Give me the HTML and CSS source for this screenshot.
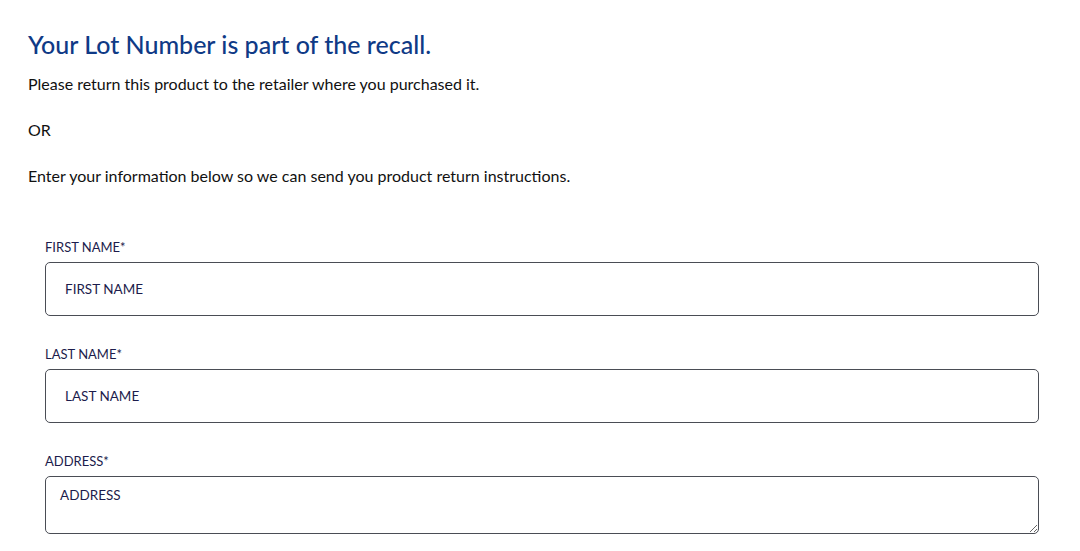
FILE: index.html
```html
<!DOCTYPE html>
<html lang="en">
<head>
<meta charset="utf-8">
<link rel="stylesheet" href="styles.css">
</head>
<body>
<main class="page">
  <h1 class="title">Your Lot Number is part of the recall.</h1>
  <p class="text first">Please return this product to the retailer where you purchased it.</p>
  <p class="text">OR</p>
  <p class="text">Enter your information below so we can send you product return instructions.</p>
  <form class="form">
    <div class="field">
      <label class="label" for="fn">FIRST NAME*</label>
      <input class="input" id="fn" type="text" placeholder="FIRST NAME">
    </div>
    <div class="field">
      <label class="label" for="ln">LAST NAME*</label>
      <input class="input" id="ln" type="text" placeholder="LAST NAME">
    </div>
    <div class="field">
      <label class="label" for="ad">ADDRESS*</label>
      <textarea class="input area" id="ad" placeholder="ADDRESS"></textarea>
    </div>
  </form>
</main>
</body>
</html>
```
FILE: styles.css
```css
html, body {
  margin: 0;
  padding: 0;
  background: #ffffff;
}
body {
  font-family: Lato, "Open Sans", sans-serif;
  color: #111111;
  overflow: hidden;
}
.page {
  padding: 26px 41px 0 28px;
}
.title {
  margin: 0;
  font-size: 25px;
  line-height: 36px;
  font-weight: 500;
  color: #0f3a86;
}
.text {
  margin: 0;
  font-size: 16px;
  line-height: 24px;
  color: #111111;
}
.text.first {
  margin-top: 10px;
}
.text + .text {
  margin-top: 22px;
}
.form {
  padding: 51px 0 0 17px;
  display: flex;
  flex-direction: column;
  gap: 30px;
}
.field {
  display: flex;
  flex-direction: column;
  gap: 7px;
}
.label {
  font-size: 13px;
  line-height: 16px;
  color: #1c1c4c;
}
.input {
  box-sizing: border-box;
  width: 100%;
  height: 54px;
  margin: 0;
  padding: 0 19px;
  border: 1px solid #4a4d55;
  border-radius: 5px;
  font-family: Lato, "Open Sans", sans-serif;
  font-size: 13.5px;
  color: #1c1c4c;
  background: #ffffff;
  outline: none;
}
.input::placeholder {
  color: #1c1c4c;
  opacity: 1;
}
.area {
  height: 58px;
  padding: 9px 14px;
  line-height: 18px;
  resize: vertical;
}
```
